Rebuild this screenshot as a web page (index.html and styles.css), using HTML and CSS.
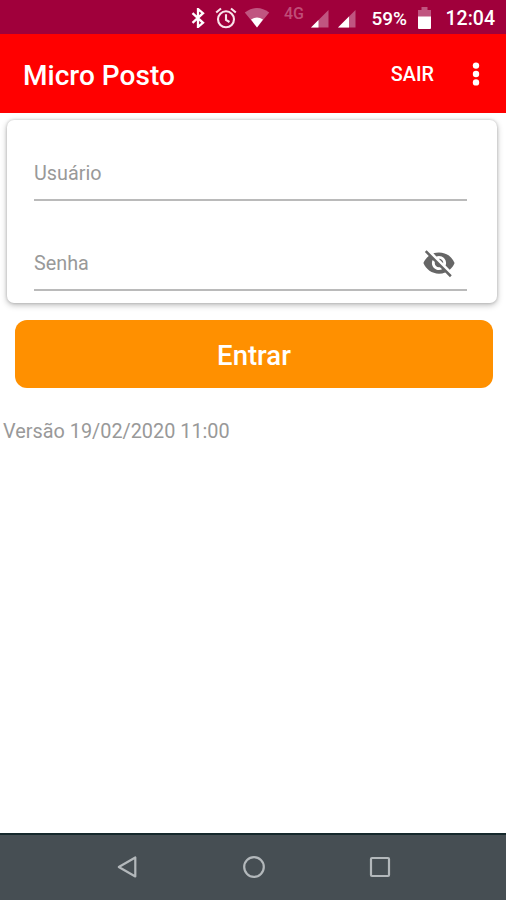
FILE: index.html
```
<!DOCTYPE html>
<html lang="pt-BR">
<head>
<meta charset="utf-8">
<title>Micro Posto</title>
<link rel="stylesheet" href="styles.css">
</head>
<body>
<div class="status">
  <svg class="bluetooth" width="14" height="20" viewBox="0 0 14 20" fill="none" stroke="#fff" stroke-width="2.3"><path d="M1.500 5.200 12 14.800 7 19V1l5 4.200L1.500 14.800"/></svg>
  <svg class="alarm" width="22" height="22" viewBox="0 0 22 22" fill="none" stroke="#f9e3ea" stroke-width="2.100"><circle cx="11" cy="12.300" r="8"/><path d="M1.200 5.500 6 1.500M20.800 5.500 16 1.500M11 7.300v5.500l3.500 2.200"/></svg>
  <svg class="wifi" width="26" height="20" viewBox="0 0 26 20"><path fill="#c05580" d="M0.800 4.500Q13-4.500 25.200 4.500L13 19.500Z"/><path fill="#fff" d="M7 11.500Q13 7.500 19 11.500L13 19.500Z"/></svg>
  <span class="network">4G</span>
  <svg class="signal" width="18" height="18" viewBox="0 0 18 18"><path fill="#c05580" d="M17.500 0v17.500H0Z"/><path fill="#fff" d="M7.500 10v7.500H0Z"/></svg>
  <svg class="signal second" width="18" height="18" viewBox="0 0 18 18"><path fill="#c05580" d="M17.500 0v17.500H0Z"/><path fill="#fff" d="M11 6.500v11H0Z"/></svg>
  <span class="percent">59%</span>
  <svg class="battery" width="13" height="22" viewBox="0 0 13 22"><path fill="#c05580" d="M0 3h3.500V0h6v3H13v7H0Z"/><path fill="#fff" d="M0 9.500h13V21a1 1 0 0 1-1 1H1a1 1 0 0 1-1-1Z"/></svg>
  <span class="clock">12:04</span>
</div>
<header class="appbar">
  <h1>Micro Posto</h1>
  <button class="exit">SAIR</button>
  <svg class="more" width="8" height="24" viewBox="0 0 8 24" fill="#fff"><circle cx="4" cy="3.600" r="3.200"/><circle cx="4" cy="12" r="3.200"/><circle cx="4" cy="20.400" r="3.200"/></svg>
</header>
<main>
  <section class="card">
    <div class="field"><span>Usuário</span></div>
    <div class="field password"><span>Senha</span>
      <svg width="34" height="34" viewBox="0 0 24 24" fill="#666"><path d="M12 7c2.760 0 5 2.240 5 5 0 .650-.130 1.260-.360 1.830l2.920 2.920c1.510-1.260 2.700-2.890 3.430-4.750-1.730-4.390-6-7.500-11-7.500-1.400 0-2.740.250-3.980.700l2.160 2.160C10.740 7.130 11.350 7 12 7zM2 4.270l2.280 2.280.460.460C3.080 8.300 1.780 10.020 1 12c1.730 4.390 6 7.500 11 7.500 1.550 0 3.030-.300 4.380-.840l.420.420L19.730 22 21 20.730 3.270 3 2 4.270zM7.530 9.800l1.550 1.550c-.050.210-.080.430-.080.650 0 1.660 1.340 3 3 3 .220 0 .440-.030.650-.080l1.550 1.550c-.670.330-1.410.530-2.200.530-2.760 0-5-2.240-5-5 0-.790.200-1.530.530-2.200zm4.310-.780 3.150 3.150.020-.160c0-1.660-1.340-3-3-3l-.170.010z"/></svg>
    </div>
  </section>
  <button class="enter">Entrar</button>
  <p class="version">Versão 19/02/2020 11:00</p>
</main>
<nav class="navbar">
  <svg width="24" height="24" viewBox="0 0 24 24"><path d="M19.300 2.500v19L2.800 12Z"/></svg>
  <svg width="24" height="24" viewBox="0 0 24 24"><circle cx="12" cy="12" r="9.800"/></svg>
  <svg width="24" height="24" viewBox="0 0 24 24"><rect x="3" y="3" width="18" height="18" rx="1"/></svg>
</nav>
</body>
</html>
```
FILE: styles.css
```
* { box-sizing: border-box; }
body {
  margin: 0;
  width: 506px;
  height: 900px;
  display: flex;
  flex-direction: column;
  overflow: hidden;
  background: #fff;
  font-family: Roboto, sans-serif;
}
svg { display: block; flex: none; }
button { border: 0; padding: 0; font-family: inherit; }
.status {
  height: 34px;
  display: flex;
  align-items: center;
  padding: 2px 11px 0 191px;
  background: #a0003b;
  color: #fff;
}
.alarm { margin-left: 10px; }
.wifi { margin-left: 7px; }
.network { width: 22px; margin: -8px 6px 0 14px; font-size: 16px; line-height: 18px; font-weight: 500; color: #c04d78; }
.signal { margin-top: 2px; }
.second { margin-left: 9px; }
.percent { width: 37px; margin-left: 15px; font-size: 19px; font-weight: 500; }
.battery { margin-left: 10px; }
.clock { margin-left: 15px; font-size: 19.500px; font-weight: 500; }
.appbar {
  height: 79px;
  display: flex;
  align-items: center;
  padding: 0 26px 0 23px;
  background: #f00;
  color: #fff;
}
.appbar h1 { flex: 1; margin: 4px 0 0; font-size: 28px; line-height: 36px; font-weight: 500; letter-spacing: .03px; }
.exit { margin: 2px 38px 0 0; background: none; color: #fff; font-size: 19.800px; font-weight: 500; }
.more { margin-top: 0; }
main { flex: 1; padding: 7px 9px 0 7px; }
.card {
  height: 183px;
  padding: 0 30px 0 27px;
  border-radius: 7px;
  background: #fff;
  box-shadow: 0 2px 6px rgba(0, 0, 0, .28), 0 0 3px rgba(0, 0, 0, .18);
}
.field {
  height: 81px;
  display: flex;
  align-items: flex-end;
  justify-content: space-between;
  padding-bottom: 13px;
  border-bottom: 2px solid #bababa;
  color: #999;
  font-size: 19.800px;
  line-height: 24px;
}
.password { height: 90px; }
.password svg { margin: 0 11px -4px 0; }
.enter {
  display: block;
  width: 478px;
  height: 68px;
  margin: 17px 0 0 8px;
  padding-top: 2px;
  border-radius: 12px;
  background: #ff9000;
  color: #fff;
  font-size: 27.500px;
  font-weight: 500;
}
.version { margin: 32px 0 0 -4px; color: #999; font-size: 19.850px; line-height: 24px; }
.navbar {
  height: 67px;
  display: flex;
  justify-content: center;
  gap: 102px;
  padding: 20px 0 0 1px;
  border-top: 2px solid #15282c;
  background: #464e53;
}
.navbar svg { fill: none; stroke: #b3b8bb; stroke-width: 2.200; stroke-linejoin: round; }
```
